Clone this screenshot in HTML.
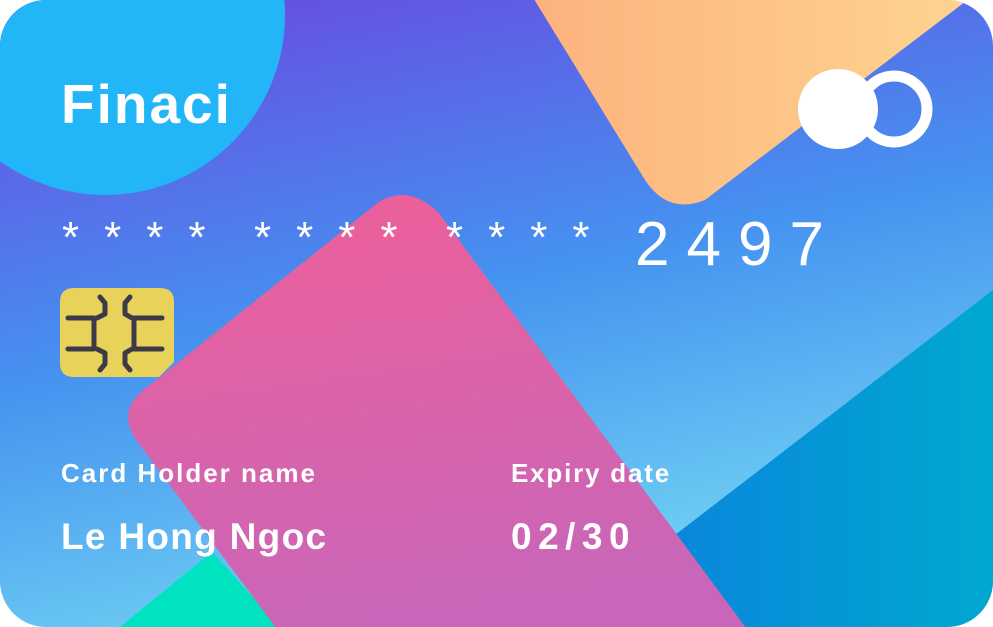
<!DOCTYPE html>
<html><head><style>
html,body{margin:0;padding:0;background:#fff;width:993px;height:627px;overflow:hidden}
svg{display:block}
text{font-family:"Liberation Sans",sans-serif;fill:#fff}
</style></head><body>
<svg width="993" height="627" viewBox="0 0 993 627">
<defs>
<clipPath id="card"><rect x="0" y="0" width="993" height="627" rx="46"/></clipPath>
<linearGradient id="bg" x1="0" y1="0" x2="0.35" y2="1">
<stop offset="0" stop-color="#6a46e0"/><stop offset="0.55" stop-color="#4592f0"/><stop offset="1" stop-color="#6fd0f3"/></linearGradient>
<linearGradient id="pink" x1="0" y1="0" x2="0.2" y2="1">
<stop offset="0" stop-color="#ef5f98"/><stop offset="1" stop-color="#c866b9"/></linearGradient>
<linearGradient id="orange" x1="0" y1="0" x2="1" y2="0">
<stop offset="0" stop-color="#fdb07c"/><stop offset="1" stop-color="#fdd892"/></linearGradient>
<linearGradient id="dblue" x1="0" y1="0" x2="1" y2="0">
<stop offset="0" stop-color="#0a86dc"/><stop offset="1" stop-color="#00a8d0"/></linearGradient>
</defs>
<g clip-path="url(#card)">
<rect width="993" height="627" fill="url(#bg)"/>
<polygon points="993,290 662,545 740,627 993,627" fill="url(#dblue)"/>
<path d="M510,-40 L645,180 Q668,215 705,200 L1020,-40 Z" fill="url(#orange)"/>
<polygon points="120,627 212,552 280,627" fill="#00e3c0"/>
<path d="M375,205 Q405,182 438,212 L755,640 L285,640 L140,445 Q112,410 150,385 Z" fill="url(#pink)"/>
<circle cx="105" cy="15" r="180" fill="#22b5f7"/>
</g>
<text x="61" y="123" font-size="55" font-weight="bold" letter-spacing="2">Finaci</text>
<circle cx="838" cy="109" r="40" fill="#fff"/>
<circle cx="894" cy="109" r="33" fill="none" stroke="#fff" stroke-width="11"/>
<text x="62" y="252" font-size="44" letter-spacing="25">****</text>
<text x="254" y="252" font-size="44" letter-spacing="25">****</text>
<text x="446" y="252" font-size="44" letter-spacing="25">****</text>
<text x="635" y="265" font-size="62" letter-spacing="17">2497</text>
<path d="M74,288 H160 Q174,288 174,302 V362 L159,377 H74 Q60,377 60,363 V302 Q60,288 74,288Z" fill="#e8d25a"/>
<g fill="none" stroke="#3c3a48" stroke-width="5" stroke-linecap="round" stroke-linejoin="round">
<path d="M68,318 H94 V349 H68"/>
<path d="M100,297 L105,303 V314 L97,318"/>
<path d="M97,349 L105,353 V364 L100,370"/>
<path d="M162,318 H134 V349 H162"/>
<path d="M130,297 L125,303 V314 L132,318"/>
<path d="M132,349 L125,353 V364 L130,370"/>
</g>
<text x="61" y="482" font-size="26" font-weight="bold" letter-spacing="2">Card Holder name</text>
<text x="61" y="549" font-size="37" font-weight="bold" letter-spacing="1.3">Le Hong Ngoc</text>
<text x="511" y="482" font-size="26" font-weight="bold" letter-spacing="1.8">Expiry date</text>
<text x="511" y="549" font-size="37" font-weight="bold" letter-spacing="6.5">02/30</text>
</svg>
</body></html>
